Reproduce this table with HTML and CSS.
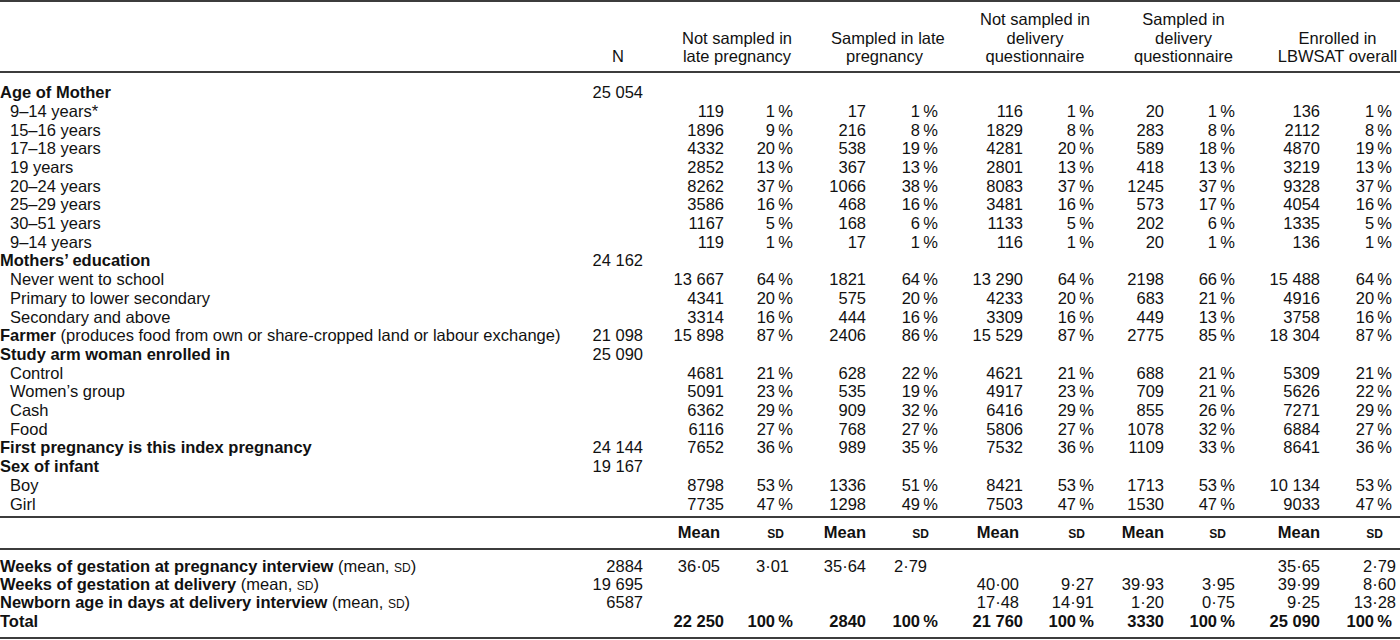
FILE: index.html
```html
<!DOCTYPE html>
<html lang="en">
<head>
<meta charset="utf-8">
<title>LBWSAT sampling table</title>
<link rel="stylesheet" href="styles.css">
</head>
<body>
<table class="tbl">
  <colgroup>
    <col class="c-label"><col class="c-n">
    <col class="c-1n"><col class="c-1p">
    <col class="c-2n"><col class="c-2p">
    <col class="c-3n"><col class="c-3p">
    <col class="c-4n"><col class="c-4p">
    <col class="c-5n"><col class="c-5p">
  </colgroup>
  <thead>
    <tr>
      <th class="h-label"></th>
      <th class="h-n">N</th>
      <th class="grp" colspan="2">Not sampled in<br>late pregnancy</th>
      <th class="grp" colspan="2">Sampled in late<br>pregnancy</th>
      <th class="grp" colspan="2">Not sampled in<br>delivery<br>questionnaire</th>
      <th class="grp" colspan="2">Sampled in<br>delivery<br>questionnaire</th>
      <th class="grp grp5" colspan="2">Enrolled in<br>LBWSAT overall</th>
    </tr>
  </thead>
  <tbody>
    <tr class="first"><td class="lab b">Age of Mother</td><td>25&nbsp;054</td><td></td><td></td><td></td><td></td><td></td><td></td><td></td><td></td><td></td><td class="last"></td></tr>
    <tr><td class="lab sub">9–14 years*</td><td></td><td>119</td><td>1&thinsp;%</td><td>17</td><td>1&thinsp;%</td><td>116</td><td>1&thinsp;%</td><td>20</td><td>1&thinsp;%</td><td>136</td><td class="last">1&thinsp;%</td></tr>
    <tr><td class="lab sub">15–16 years</td><td></td><td>1896</td><td>9&thinsp;%</td><td>216</td><td>8&thinsp;%</td><td>1829</td><td>8&thinsp;%</td><td>283</td><td>8&thinsp;%</td><td>2112</td><td class="last">8&thinsp;%</td></tr>
    <tr><td class="lab sub">17–18 years</td><td></td><td>4332</td><td>20&thinsp;%</td><td>538</td><td>19&thinsp;%</td><td>4281</td><td>20&thinsp;%</td><td>589</td><td>18&thinsp;%</td><td>4870</td><td class="last">19&thinsp;%</td></tr>
    <tr><td class="lab sub">19 years</td><td></td><td>2852</td><td>13&thinsp;%</td><td>367</td><td>13&thinsp;%</td><td>2801</td><td>13&thinsp;%</td><td>418</td><td>13&thinsp;%</td><td>3219</td><td class="last">13&thinsp;%</td></tr>
    <tr><td class="lab sub">20–24 years</td><td></td><td>8262</td><td>37&thinsp;%</td><td>1066</td><td>38&thinsp;%</td><td>8083</td><td>37&thinsp;%</td><td>1245</td><td>37&thinsp;%</td><td>9328</td><td class="last">37&thinsp;%</td></tr>
    <tr><td class="lab sub">25–29 years</td><td></td><td>3586</td><td>16&thinsp;%</td><td>468</td><td>16&thinsp;%</td><td>3481</td><td>16&thinsp;%</td><td>573</td><td>17&thinsp;%</td><td>4054</td><td class="last">16&thinsp;%</td></tr>
    <tr><td class="lab sub">30–51 years</td><td></td><td>1167</td><td>5&thinsp;%</td><td>168</td><td>6&thinsp;%</td><td>1133</td><td>5&thinsp;%</td><td>202</td><td>6&thinsp;%</td><td>1335</td><td class="last">5&thinsp;%</td></tr>
    <tr><td class="lab sub">9–14 years</td><td></td><td>119</td><td>1&thinsp;%</td><td>17</td><td>1&thinsp;%</td><td>116</td><td>1&thinsp;%</td><td>20</td><td>1&thinsp;%</td><td>136</td><td class="last">1&thinsp;%</td></tr>
    <tr><td class="lab b">Mothers’ education</td><td>24&nbsp;162</td><td></td><td></td><td></td><td></td><td></td><td></td><td></td><td></td><td></td><td class="last"></td></tr>
    <tr><td class="lab sub">Never went to school</td><td></td><td>13&nbsp;667</td><td>64&thinsp;%</td><td>1821</td><td>64&thinsp;%</td><td>13&nbsp;290</td><td>64&thinsp;%</td><td>2198</td><td>66&thinsp;%</td><td>15&nbsp;488</td><td class="last">64&thinsp;%</td></tr>
    <tr><td class="lab sub">Primary to lower secondary</td><td></td><td>4341</td><td>20&thinsp;%</td><td>575</td><td>20&thinsp;%</td><td>4233</td><td>20&thinsp;%</td><td>683</td><td>21&thinsp;%</td><td>4916</td><td class="last">20&thinsp;%</td></tr>
    <tr><td class="lab sub">Secondary and above</td><td></td><td>3314</td><td>16&thinsp;%</td><td>444</td><td>16&thinsp;%</td><td>3309</td><td>16&thinsp;%</td><td>449</td><td>13&thinsp;%</td><td>3758</td><td class="last">16&thinsp;%</td></tr>
    <tr><td class="lab"><b>Farmer</b> (produces food from own or share-cropped land or labour exchange)</td><td>21&nbsp;098</td><td>15&nbsp;898</td><td>87&thinsp;%</td><td>2406</td><td>86&thinsp;%</td><td>15&nbsp;529</td><td>87&thinsp;%</td><td>2775</td><td>85&thinsp;%</td><td>18&nbsp;304</td><td class="last">87&thinsp;%</td></tr>
    <tr><td class="lab b">Study arm woman enrolled in</td><td>25&nbsp;090</td><td></td><td></td><td></td><td></td><td></td><td></td><td></td><td></td><td></td><td class="last"></td></tr>
    <tr><td class="lab sub">Control</td><td></td><td>4681</td><td>21&thinsp;%</td><td>628</td><td>22&thinsp;%</td><td>4621</td><td>21&thinsp;%</td><td>688</td><td>21&thinsp;%</td><td>5309</td><td class="last">21&thinsp;%</td></tr>
    <tr><td class="lab sub">Women’s group</td><td></td><td>5091</td><td>23&thinsp;%</td><td>535</td><td>19&thinsp;%</td><td>4917</td><td>23&thinsp;%</td><td>709</td><td>21&thinsp;%</td><td>5626</td><td class="last">22&thinsp;%</td></tr>
    <tr><td class="lab sub">Cash</td><td></td><td>6362</td><td>29&thinsp;%</td><td>909</td><td>32&thinsp;%</td><td>6416</td><td>29&thinsp;%</td><td>855</td><td>26&thinsp;%</td><td>7271</td><td class="last">29&thinsp;%</td></tr>
    <tr><td class="lab sub">Food</td><td></td><td>6116</td><td>27&thinsp;%</td><td>768</td><td>27&thinsp;%</td><td>5806</td><td>27&thinsp;%</td><td>1078</td><td>32&thinsp;%</td><td>6884</td><td class="last">27&thinsp;%</td></tr>
    <tr><td class="lab b">First pregnancy is this index pregnancy</td><td>24&nbsp;144</td><td>7652</td><td>36&thinsp;%</td><td>989</td><td>35&thinsp;%</td><td>7532</td><td>36&thinsp;%</td><td>1109</td><td>33&thinsp;%</td><td>8641</td><td class="last">36&thinsp;%</td></tr>
    <tr><td class="lab b">Sex of infant</td><td>19&nbsp;167</td><td></td><td></td><td></td><td></td><td></td><td></td><td></td><td></td><td></td><td class="last"></td></tr>
    <tr><td class="lab sub">Boy</td><td></td><td>8798</td><td>53&thinsp;%</td><td>1336</td><td>51&thinsp;%</td><td>8421</td><td>53&thinsp;%</td><td>1713</td><td>53&thinsp;%</td><td>10&nbsp;134</td><td class="last">53&thinsp;%</td></tr>
    <tr class="end"><td class="lab sub">Girl</td><td></td><td>7735</td><td>47&thinsp;%</td><td>1298</td><td>49&thinsp;%</td><td>7503</td><td>47&thinsp;%</td><td>1530</td><td>47&thinsp;%</td><td>9033</td><td class="last">47&thinsp;%</td></tr>
    <tr class="meanhead"><td class="lab"></td><td></td>
      <td class="b m-in">Mean</td><td class="b sdh"><span class="sc">sd</span></td>
      <td class="b">Mean</td><td class="b sdh"><span class="sc">sd</span></td>
      <td class="b m-in">Mean</td><td class="b sdh"><span class="sc">sd</span></td>
      <td class="b">Mean</td><td class="b sdh"><span class="sc">sd</span></td>
      <td class="b">Mean</td><td class="b sdh last"><span class="sc">sd</span></td>
    </tr>
    <tr class="low lowfirst"><td class="lab"><b>Weeks of gestation at pregnancy interview</b> (mean, <span class="sc">sd</span>)</td><td>2884</td><td class="m-in">36·05</td><td class="sd-in">3·01</td><td>35·64</td><td class="sd-wide">2·79</td><td></td><td></td><td></td><td></td><td>35·65</td><td class="last sd-last">2·79</td></tr>
    <tr class="low"><td class="lab"><b>Weeks of gestation at delivery</b> (mean, <span class="sc">sd</span>)</td><td>19&nbsp;695</td><td></td><td></td><td></td><td></td><td class="m-in">40·00</td><td>9·27</td><td>39·93</td><td>3·95</td><td>39·99</td><td class="last sd-last">8·60</td></tr>
    <tr class="low"><td class="lab"><b>Newborn age in days at delivery interview</b> (mean, <span class="sc">sd</span>)</td><td>6587</td><td></td><td></td><td></td><td></td><td class="m-in">17·48</td><td>14·91</td><td>1·20</td><td>0·75</td><td>9·25</td><td class="last sd-last">13·28</td></tr>
    <tr class="low total"><td class="lab">Total</td><td></td><td>22&nbsp;250</td><td>100&thinsp;%</td><td>2840</td><td>100&thinsp;%</td><td>21&nbsp;760</td><td>100&thinsp;%</td><td>3330</td><td>100&thinsp;%</td><td>25&nbsp;090</td><td class="last">100&thinsp;%</td></tr>
  </tbody>
</table>
</body>
</html>
```

FILE: styles.css
```css
html, body {
  margin: 0;
  padding: 0;
  background: #ffffff;
}

body {
  font-family: "Liberation Sans", Arial, sans-serif;
  font-size: 16.5px;
  color: #111111;
}

.tbl {
  width: 1400px;
  table-layout: fixed;
  border-collapse: separate;
  border-spacing: 0;
}

.c-label { width: 560px; }
.c-n { width: 83px; }
.c-1n { width: 81px; }
.c-1p { width: 69px; }
.c-2n { width: 73px; }
.c-2p { width: 72px; }
.c-3n { width: 85px; }
.c-3p { width: 71px; }
.c-4n { width: 70px; }
.c-4p { width: 71px; }
.c-5n { width: 85px; }
.c-5p { width: 80px; }

th, td {
  padding: 0;
  line-height: 18.7px;
  white-space: nowrap;
  text-align: right;
  font-weight: normal;
}

thead th {
  vertical-align: bottom;
  border-top: 2px solid #3c3c3c;
  border-bottom: 2px solid #3c3c3c;
  padding-top: 8px;
  padding-bottom: 5px;
}

.h-n {
  padding-right: 19px;
}

.grp {
  text-align: center;
  padding-left: 38px;
}

.grp5 {
  padding-left: 40px;
}

.lab {
  text-align: left;
}

.sub {
  padding-left: 10px;
}

.b, .b b {
  font-weight: bold;
}

b {
  font-weight: bold;
}

.last {
  padding-right: 8px;
}

tr.first td {
  padding-top: 10px;
}

tr.end td {
  padding-bottom: 3px;
  border-bottom: 2px solid #3c3c3c;
}

tr.meanhead td {
  padding-top: 5px;
  padding-bottom: 6px;
  border-bottom: 2px solid #3c3c3c;
}

.sc {
  font-variant: small-caps;
}

.sdh {
  padding-right: 9px;
}

.sdh.last {
  padding-right: 17px;
}

.m-in {
  padding-right: 4px;
}

.sd-in {
  padding-right: 4px;
}

.sd-wide {
  padding-right: 11px;
}

.last.sd-last {
  padding-right: 4px;
}

tr.low td {
  line-height: 18.2px;
}

tr.lowfirst td {
  padding-top: 7px;
}

tr.total td {
  font-weight: bold;
  padding-bottom: 7px;
  border-bottom: 2px solid #3c3c3c;
}
```
